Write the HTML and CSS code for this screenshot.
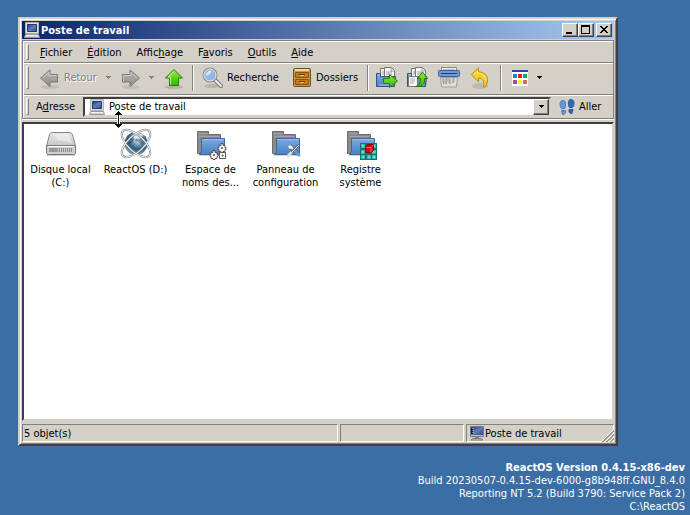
FILE: index.html
```html
<!DOCTYPE html>
<html lang="fr">
<head>
<meta charset="utf-8">
<title>Poste de travail</title>
<link rel="stylesheet" href="styles.css">
</head>
<body>
<svg class="defs" aria-hidden="true">
  <defs>
    <linearGradient id="screen" x1="0" y1="0" x2="1" y2="1"><stop offset="0" stop-color="#283d80"/><stop offset=".5" stop-color="#5b7dba"/><stop offset="1" stop-color="#2f4a8b"/></linearGradient>
    <linearGradient id="green" x1="0" y1="0" x2="0" y2="1"><stop offset="0" stop-color="#8fee3c"/><stop offset="1" stop-color="#31b600"/></linearGradient>
    <linearGradient id="gray" x1="0" y1="0" x2="0" y2="1"><stop offset="0" stop-color="#b9b7b3"/><stop offset="1" stop-color="#8e8d8a"/></linearGradient>
    <linearGradient id="blue" x1="0" y1="0" x2="0" y2="1"><stop offset="0" stop-color="#7ca9df"/><stop offset="1" stop-color="#4b80c4"/></linearGradient>
    <linearGradient id="metal" x1="0" y1="0" x2="0" y2="1"><stop offset="0" stop-color="#e6e6e6"/><stop offset="1" stop-color="#c8c8c8"/></linearGradient>
    <radialGradient id="globe" cx=".6" cy=".3" r=".75"><stop offset="0" stop-color="#fff"/><stop offset=".3" stop-color="#86aac4"/><stop offset=".6" stop-color="#2d5877"/><stop offset="1" stop-color="#86abc6"/></radialGradient>
    <symbol id="computer" viewBox="0 0 16 16">
      <path d="M1.500 .5h13v11h-13z" fill="#ddd" stroke="#b5b3ad"/><path d="M3.500 2.500h9v7h-9z" fill="url(#screen)" stroke="#24397a"/>
      <path d="M1.500 12.500h13l1 3H.5z" fill="#d2d1cc" stroke="#999"/><path d="M2 13.500h12" stroke="#f4f4f4"/>
    </symbol>
    <symbol id="folder" viewBox="0 0 32 32">
      <path d="M2.500 25.500V3.500h11v3h12V25.500z" fill="#8b8b8b" stroke="#6c6c6c"/><path d="M4 5.500h8M4 8.500h20" stroke="#a1a1a1"/>
      <path d="M6.500 10.500h23v16h-25l2-3z" fill="url(#blue)" stroke="#3d689f"/><path d="M7.500 11.500h21" stroke="#9dc0e9"/>
      <path d="M3 27.500h26" stroke="#999" opacity=".4"/>
    </symbol>
    <symbol id="down" viewBox="0 0 5 3"><path d="M0 0h5v1H4v1H3v1H2V2H1V1H0z" fill="currentColor"/></symbol>
    <symbol id="papers" viewBox="0 0 24 24">
      <path d="M5.500 2.500h7l3 3v11h-10z" fill="#f5f5f4" stroke="#777"/><path d="M9.500 1.500h7l3 3v12h-10z" fill="#f7f7f6" stroke="#777"/><path d="M16 2v3h3M11 6h6M11 8h6M7 6h2M7 8h2" fill="none" stroke="#999"/>
      <path d="M1.500 7.500h4v3h15l-1 10h-18z" fill="url(#blue)" stroke="#315587"/><path d="M3 9h2M4 19h14" stroke="#b2cced"/>
    </symbol>
  </defs>
</svg>

<main class="window">
  <header class="titlebar">
    <svg class="i16"><use href="#computer"/></svg>
    <h1>Poste de travail</h1>
    <div class="captions">
      <button aria-label="Réduire"><svg viewBox="0 0 12 10"><path d="M2 7h6v2H2z"/></svg></button>
      <button aria-label="Agrandir"><svg viewBox="0 0 12 10"><path d="M1 0h9v9H1zM2 2v6h7V2z" fill-rule="evenodd"/></svg></button>
      <button class="close" aria-label="Fermer"><svg viewBox="0 0 12 10"><path d="M2 1h2v1h1v1h2V2h1V1h2v1H9v1H8v1H7v1h1v1h1v1h1v1H8V7H7V6H5v1H4v1H2V7h1V6h1V5h1V4H4V3H3V2H2z"/></svg></button>
    </div>
  </header>

  <div class="rebar">
    <nav class="band menu" aria-label="Menu">
      <span class="grip"></span>
      <button><u>F</u>ichier</button><button><u>É</u>dition</button><button>Affic<u>h</u>age</button><button>F<u>a</u>voris</button><button><u>O</u>utils</button><button><u>A</u>ide</button>
    </nav>
    <div class="band tools">
      <span class="grip"></span>
      <button class="back off" disabled>
        <svg class="i24" viewBox="0 0 24 24"><ellipse cx="12" cy="21" rx="9" ry="2" fill="#a5a29b" opacity=".4"/><path d="M2.500 12l9.500-8v4.500h7.500v7.500H12v4.500z" fill="url(#gray)" stroke="#777"/><path d="M4.500 12L11 6.500v3h7.500" fill="none" stroke="#ccc"/></svg>
        <span>Retour</span></button>
      <button class="drop off" aria-label="Historique précédent" disabled><svg class="down"><use href="#down"/></svg></button>
      <button class="off" aria-label="Suivant" disabled>
        <svg class="i24" viewBox="0 0 24 24"><ellipse cx="12" cy="21" rx="9" ry="2" fill="#a5a29b" opacity=".4"/><path d="M20.500 12L11 4v4.500H3.500v7.500H11v4.500z" fill="url(#gray)" stroke="#777"/><path d="M4.500 15V9.500H12v-3l6.500 5.500" fill="none" stroke="#ccc"/></svg></button>
      <button class="drop off" aria-label="Historique suivant" disabled><svg class="down"><use href="#down"/></svg></button>
      <button aria-label="Dossier parent">
        <svg class="i24" viewBox="0 0 24 24"><ellipse cx="12" cy="21" rx="9" ry="2" fill="#777" opacity=".35"/><path d="M12 3.500l8.500 8.500h-4v7.500h-9V12h-4z" fill="url(#green)" stroke="#257e00"/><path d="M12 5.500L6 11h2.500v7.500" fill="none" stroke="#c6f69c"/></svg></button>
      <span class="sep"></span>
      <button class="search">
        <svg class="i24" viewBox="0 0 24 24"><ellipse cx="11" cy="20" rx="8" ry="2" fill="#777" opacity=".3"/><path d="M14 14l6 6" stroke="#777" stroke-width="4" stroke-linecap="round"/><path d="M14 14l6 6" stroke="#eee" stroke-width="2" stroke-linecap="round"/><circle cx="9" cy="9" r="6.500" fill="#8fb8ea" stroke="#8a8a8a" stroke-width="2"/><circle cx="9" cy="9" r="6" fill="none" stroke="#e9f2fb"/><path d="M5 10c0-4 2-6 6-5-2 3-3 4-6 5z" fill="#d5e7fb"/></svg>
        <span>Recherche</span></button>
      <button class="folders">
        <svg class="i24" viewBox="0 0 24 24"><rect x="3.500" y="2.500" width="17" height="18" rx="1" fill="#c49a50" stroke="#6d5220"/><path d="M5 4h14" stroke="#efd79c" stroke-width="2"/><path d="M5.500 6.500h13v5h-13zM5.500 13.500h13v5h-13z" fill="#c77b13" stroke="#8a5510"/><path d="M9 8.500h6M9 15.500h6" stroke="#5b3810"/><path d="M10 9.500h4M10 16.500h4" stroke="#e2c088"/></svg>
        <span>Dossiers</span></button>
      <span class="sep"></span>
      <button class="wide" aria-label="Déplacer vers"><svg class="i24" viewBox="0 0 24 24"><use href="#papers"/><path d="M8.500 12.500h6v-4l8 6.500-8 6.500v-4h-6z" fill="url(#green)" stroke="#257e00"/></svg></button>
      <button class="wide" aria-label="Copier vers"><svg class="i24" viewBox="0 0 24 24"><use href="#papers"/><path d="M2.500 10.500h9v10h-9z" fill="#f6f6f6" stroke="#777"/><path d="M4 13h5M4 15h5M4 17h4" stroke="#aaa"/><path d="M9.500 20.500c4-1 5-3 5-8h-3l5-6.500 5 6.500h-3c1 5-3 9-9 8z" fill="url(#green)" stroke="#257e00"/></svg></button>
      <button class="wide" aria-label="Supprimer"><svg class="i24" viewBox="0 0 24 24"><path d="M4.500 1.500h15v6h-15z" fill="#eee" stroke="#888"/><path d="M6 3.500h12" stroke="#bbb"/><rect x="1.500" y="4.500" width="21" height="6" rx="1" fill="#6d99cf" stroke="#3a659f"/><path d="M4 7.500h16" stroke="#1d4173"/><path d="M3.500 11.500h17l-1 9.500h-15z" fill="#deddd9" stroke="#a0a09c"/><path d="M6 12v4l1 2v-5m2-1v6l1-3v-3m2 0v4l1 2v-5m3-1v5l1-2v-3" fill="none" stroke="#999"/></svg></button>
      <button class="undo" aria-label="Annuler"><svg class="i24" viewBox="0 0 24 24"><ellipse cx="12" cy="20" rx="8" ry="3" fill="#777" opacity=".25"/><path d="M3.500 8.500l7-6.500v4c7 0 11 5 8 13-1 2-2 2-3 2 1-5 0-9-5-9v4z" fill="#f3cf28" stroke="#c08d10"/><path d="M5.500 8.500l4-3.500v2c5 0 8 3 8 7" fill="none" stroke="#ffed8a"/></svg></button>
      <span class="sep"></span>
      <button aria-label="Affichage"><svg class="i24" viewBox="0 0 24 24"><path d="M4 4h16v16H4z" fill="#fff"/><path d="M4 4h16v2H4z" fill="#26479a"/><path d="M5 8h4v4H5z" fill="#1688d6"/><path d="M10 8h4v4h-4z" fill="#ed1923"/><path d="M15 8h4v4h-4z" fill="#10b052"/><path d="M5 14h4v4H5z" fill="#9f4ba7"/><path d="M10 14h4v4h-4z" fill="#fff200"/><path d="M15 14h4v4h-4z" fill="#c3754f"/></svg></button>
      <button class="views" aria-label="Choisir l'affichage"><svg class="down"><use href="#down"/></svg></button>
    </div>
    <div class="band address">
      <span class="grip"></span>
      <label for="path">A<u>d</u>resse</label>
      <div class="combo">
        <svg class="i16"><use href="#computer"/></svg>
        <select id="path"><option>Poste de travail</option></select>
        <span class="arrow"><svg class="down"><use href="#down"/></svg></span>
      </div>
      <button class="go">
        <svg class="i16" viewBox="0 0 16 16"><g fill="#6799d1" stroke="#4a7dba"><path d="M2 9C0 5 1 1.500 4 1.500c3 0 3 3.500 2 7.500-1 1-3 1-4 0zM2.500 11.500h4v2l-1.500 2H3.500z"/></g><g fill="#3469af" stroke="#2c5c9f"><path d="M10 8C9 4 9 .500 12 .500s4 4 2 7.500c-1 1-3 1-4 0zM10 10.500h4l-1 4h-1.500L10 13z"/></g></svg>
        <span>Aller</span></button>
    </div>
  </div>

  <section class="files" aria-label="Contenu">
    <a class="item" href="#c"><svg class="i32" viewBox="0 0 32 32"><path d="M2 27.500h28" stroke="#888" opacity=".4"/><path d="M6.500 4.500h19q1 0 2 2l3 11.500h-29l3-11.500q1-2 2-2z" fill="url(#metal)" stroke="#888"/><path d="M1.500 17.500h29v7q0 2-2 2h-25q-2 0-2-2z" fill="#cfcfcf" stroke="#777"/><path d="M3 18.500h26" stroke="#fff"/><path d="M4 20h9v4H4z" fill="#999"/><path d="M14.500 20v4m2-4v4m2-4v4m2-4v4m2-4v4m2-4v4m2-4v4" stroke="#888"/><path d="M9 6h14l4 9-14-3z" fill="#fff" opacity=".4"/></svg><span>Disque local (C:)</span></a>
    <a class="item" href="#d"><svg class="i32" viewBox="0 0 32 32"><circle cx="16" cy="15.500" r="11.500" fill="url(#globe)"/><path d="M5 13l6-5 3 3-2 4-4 1-1 4M18 6l3 3 5-1 1 6-5 3-3-3-4-1z" fill="#24465e" opacity=".5"/><path d="M13 5l4-1 6 3-4 4-5-1z" fill="#f5fbff" opacity=".8"/><g fill="none"><g stroke="#777" stroke-width="2"><ellipse cx="16" cy="15.500" rx="18" ry="8" transform="rotate(43 16 15.500)"/><ellipse cx="16" cy="15.500" rx="18" ry="8" transform="rotate(-43 16 15.500)"/></g><g stroke="#f6f6f6"><ellipse cx="16" cy="15.500" rx="18" ry="8" transform="rotate(43 16 15.500)"/><ellipse cx="16" cy="15.500" rx="18" ry="8" transform="rotate(-43 16 15.500)"/></g></g></svg><span>ReactOS (D:)</span></a>
    <a class="item" href="#ns"><svg class="i32" viewBox="0 0 32 32"><use href="#folder"/><g fill="#fff" stroke="#555"><g id="gear"><path d="M26 15.500h2v2h2v2h1v2h-1v2h-2v1h-2v-1h-2v-2h-1v-2h1v-2h2z"/><path d="M26.500 19.500h1v1h-1z"/></g><use href="#gear" x="-8" y="7"/><path d="M24.500 24.500h6v6h-6z"/><path d="M27 27h1v1h-1z"/></g></svg><span>Espace de noms des...</span></a>
    <a class="item" href="#cp"><svg class="i32" viewBox="0 0 32 32"><use href="#folder"/><path d="M20 18l8 8" stroke="#5d6b7c" stroke-width="4"/><path d="M20 18l8 8" stroke="#f4f4f4" stroke-width="2"/><path d="M18 19l2 2 2-2-2-2" fill="#fff"/><path d="M29 17l-9 9" stroke="#5d6b7c" stroke-width="3"/><path d="M29 17l-9 9" stroke="#f4f4f4"/><path d="M26 24l3 3" stroke="#5e97d4" stroke-width="3" stroke-linecap="round"/><path d="M18 28l3-3" stroke="#ddd" stroke-width="3" stroke-linecap="round"/></svg><span>Panneau de configuration</span></a>
    <a class="item" href="#reg"><svg class="i32" viewBox="0 0 32 32"><use href="#folder"/><path d="M15 15h17v17H15z" fill="#087876"/><path d="M16.500 16.500h3v3h-3zM27.500 16.500h3v3h-3zM16.500 22.500h3v3h-3zM16.500 27.500h3v3h-3zM22.500 27.500h3v3h-3zM27.500 27.500h3v3h-3zM27.500 22.500h3v3h-3z" fill="#7ccdc5" stroke="#4bb7b0"/><path d="M20.500 18.500l2-2h6v6l-2 2h-6z" fill="#d40912" stroke="#8c0008"/><path d="M21 19.500h5v5M26 19.500l2-2" fill="none" stroke="#ff5960"/></svg><span>Registre système</span></a>
  </section>

  <footer class="status">
    <span class="pane count">5 objet(s)</span>
    <span class="pane blank"></span>
    <span class="pane place"><svg class="i16" viewBox="0 0 16 16"><path d="M4 13.500h8l2 1.500H2z" fill="#ddd" stroke="#777"/><path d="M6 11h4v2H6z" fill="#888"/><path d="M1.500 1.500h13v10h-13z" fill="#bbb" stroke="#777"/><path d="M2 2h12v8H2z" fill="url(#screen)"/><path d="M3 3v6" stroke="#101b38" stroke-width="2"/><path d="M4 3v1m0 1v1m0 1v1" stroke="#ccd8ff"/></svg>Poste de travail</span>
    <svg class="resize" viewBox="0 0 13 13"><path d="M0 13L13 0M4 13l9-9M8 13l5-5" stroke="#fff"/><path d="M1 13L13 1M2 13L13 2M5 13l8-8M6 13l7-7M9 13l4-4M10 13l3-3" stroke="#999"/></svg>
  </footer>
  <svg class="cursor" viewBox="0 0 9 19"><path d="M4.500 0L9 5H6v9h3l-4.500 5L0 14h3V5H0z" fill="#fff"/><path d="M4 1h1v1h1v1h1v1h1v1H5v9h3v1H7v1H6v1H5v1H4v-1H3v-1H2v-1H1v-1h3V5H1V4h1V3h1V2h1z"/></svg>
</main>

<aside class="version"><strong>ReactOS Version 0.4.15-x86-dev</strong><span>Build 20230507-0.4.15-dev-6000-g8b948ff.GNU_8.4.0</span><span>Reporting NT 5.2 (Build 3790: Service Pack 2)</span><span>C:\ReactOS</span></aside>
</body>
</html>
```

FILE: styles.css
```css
* { box-sizing: border-box; }
html { height: 100%; }
body {
  margin: 0;
  min-height: 100%;
  display: flex;
  flex-direction: column;
  background: #3a6ea5;
  color: #000;
  font: 11px/13px "DejaVu Sans Condensed", Tahoma, sans-serif;
}
button, select {
  font: inherit;
  color: inherit;
  background: none;
  border: 0;
  padding: 0;
  margin: 0;
}
svg { display: block; flex: none; }
u { text-underline-offset: 1px; }
.defs { position: absolute; width: 0; height: 0; }
.i16 { width: 16px; height: 16px; }
.i24 { width: 24px; height: 24px; }
.i32 { width: 32px; height: 32px; }
.down { width: 5px; height: 3px; }

.window {
  position: relative;
  flex: 1;
  display: flex;
  flex-direction: column;
  margin: 17px 72px 0 18px;
  padding: 2px;
  background: #d4d0c8;
  border: 2px solid;
  border-color: #d4d0c8 #404040 #404040 #d4d0c8;
  box-shadow: inset 1px 1px #fff, inset -1px -1px #808080;
}
.titlebar {
  display: flex;
  align-items: center;
  height: 18px;
  padding: 0 2px;
  gap: 1px;
  color: #fff;
  background: linear-gradient(90deg, #0a246a, #a6caf0);
}
.titlebar h1 { flex: 1; margin: 0; font-size: 11px; font-weight: bold; }
.captions { display: flex; }
.captions button {
  width: 16px;
  height: 14px;
  padding: 1px;
  background: #d4d0c8;
  border: 1px solid;
  border-color: #fff #404040 #404040 #fff;
  box-shadow: inset -1px -1px #808080;
}
.captions svg { width: 12px; height: 10px; }
.captions .close { margin-left: 2px; }

.rebar {
  margin-top: 1px;
  border: 1px solid #808080;
  box-shadow: inset 1px 1px #fff, 0 1px #fff;
  padding: 1px 0 0 1px;
}
.band { display: flex; align-items: center; }
.band + .band { border-top: 1px solid #808080; box-shadow: inset 0 1px #fff; padding-top: 1px; }
.grip {
  align-self: stretch;
  width: 3px;
  margin: 2px 9px 2px 2px;
  border: 1px solid;
  border-color: #fff #808080 #808080 #fff;
}
.menu { height: 20px; gap: 15px; }
.menu .grip { margin-right: -4px; }
.band.tools { height: 32px; padding-bottom: 3px; }
.tools button { display: flex; align-items: center; gap: 2px; height: 24px; }
.tools .back { width: 62px; }
.tools .search { width: 90px; padding-left: 1px; }
.tools .folders { width: 71px; }
.tools .wide { width: 31px; }
.tools .undo { width: 26px; }
.tools .drop { width: 19px; padding-right: 2px; justify-content: center; }
.tools .views { width: 14px; justify-content: center; }
.off { color: #808080; text-shadow: 1px 1px #fff; }
.sep {
  width: 2px;
  height: 26px;
  margin: 0 6px;
  border-left: 1px solid #808080;
  border-right: 1px solid #fff;
}
.address { height: 24px; padding-bottom: 1px; }
.address .grip { margin-right: 7px; }
.address label { width: 47px; }
.combo {
  position: relative;
  display: flex;
  align-items: center;
  flex: 1;
  height: 20px;
  padding-left: 4px;
  background: #fff;
  border: 2px solid;
  border-color: #404040 #d4d0c8 #d4d0c8 #404040;
}
.combo select { flex: 1; height: 16px; padding-left: 4px; appearance: none; outline: 0; }
.arrow {
  position: absolute;
  right: 0;
  top: 0;
  bottom: 0;
  width: 16px;
  display: grid;
  place-items: center;
  pointer-events: none;
  background: #d4d0c8;
  border: 1px solid;
  border-color: #fff #404040 #404040 #fff;
  box-shadow: inset -1px -1px #808080;
}
.go { display: flex; align-items: center; gap: 4px; width: 62px; padding-left: 8px; }

.files {
  flex: 1;
  display: flex;
  flex-wrap: wrap;
  align-content: flex-start;
  margin-top: 3px;
  padding: 4px 0;
  background: #fff;
  border: 2px solid;
  border-color: #404040 #d4d0c8 #d4d0c8 #404040;
}
.item {
  display: flex;
  flex-direction: column;
  align-items: center;
  gap: 3px;
  width: 75px;
  padding-right: 2px;
  color: #000;
  text-align: center;
  text-decoration: none;
}
.item span { max-width: 68px; }

.status {
  position: relative;
  display: grid;
  grid-template-columns: 1fr 124px 148px;
  gap: 2px;
  height: 18px;
  margin-top: 3px;
}
.pane {
  display: flex;
  align-items: center;
  padding: 0 1px;
  white-space: nowrap;
  border: 1px solid;
  border-color: #808080 #fff #fff #808080;
}
.place { padding-left: 2px; }
.resize { position: absolute; right: 0; bottom: 0; width: 13px; height: 13px; }
.cursor { position: absolute; left: 94px; top: 91px; width: 9px; height: 19px; }

.version {
  display: flex;
  flex-direction: column;
  align-items: flex-end;
  padding: 15px 5px 2px;
  color: #fff;
}
```
